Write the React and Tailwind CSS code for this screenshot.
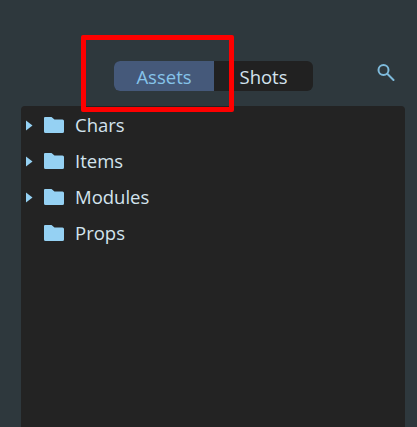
import React from 'react';

const items = [
  { name: 'Chars', arrow: true },
  { name: 'Items', arrow: true },
  { name: 'Modules', arrow: true },
  { name: 'Props', arrow: false },
];

function Folder() {
  return (
    <svg width="20" height="16" viewBox="0 0 20 16" className="block">
      <path d="M1 0H7.5L10.5 2.5H18.5Q20 2.5 20 4V14.5Q20 16 18.5 16H1.5Q0 16 0 14.5V1Q0 0 1 0Z" fill="#95d1f3" />
    </svg>
  );
}

function Row({ name, arrow }) {
  return (
    <div className="flex h-9 items-center">
      <div className="flex w-[23px] justify-start pl-[5px]">
        {arrow && (
          <svg width="7" height="11" viewBox="0 0 7 11" className="block">
            <path d="M0 0.5L6.5 5.5L0 10.5Z" fill="#95d1f3" />
          </svg>
        )}
      </div>
      <Folder />
      <span className="ml-[11px] text-[18.5px] text-[#d3e3ee]">{name}</span>
    </div>
  );
}

export default function App() {
  return (
    <div
      className="relative h-[427px] w-[417px] overflow-hidden bg-[#2e383d]"
      style={{ fontFamily: '"Open Sans", "Noto Sans", sans-serif' }}
    >
      <div className="flex h-[106px] items-start pl-[114px] pt-[61px]">
        <div className="flex h-[30px] w-[199px] overflow-hidden rounded-md bg-[#212121] text-[18.5px]">
          <div className="flex w-[100px] items-center justify-center bg-[#45597a] pt-[1px] text-[#86c4ea]">Assets</div>
          <div className="flex flex-1 items-center justify-center pt-[1px] text-[#d3e3ee]">Shots</div>
        </div>
        <svg width="18" height="18" viewBox="0 0 18 18" className="ml-[64px] mt-[2px] block" fill="none" stroke="#7ebadb" strokeWidth="2">
          <circle cx="6.5" cy="7" r="5" />
          <path d="M10.5 11L16.5 17" strokeLinecap="round" />
        </svg>
      </div>
      <div className="ml-[21px] h-[321px] w-[384px] rounded-t-[4px] bg-[#232323] pt-[1px]">
        {items.map((item) => (
          <Row key={item.name} name={item.name} arrow={item.arrow} />
        ))}
      </div>
      <div className="pointer-events-none absolute left-[81px] top-[35px] h-[77px] w-[153px] rounded-[2px] border-[5px] border-[#fe0000]" />
    </div>
  );
}
